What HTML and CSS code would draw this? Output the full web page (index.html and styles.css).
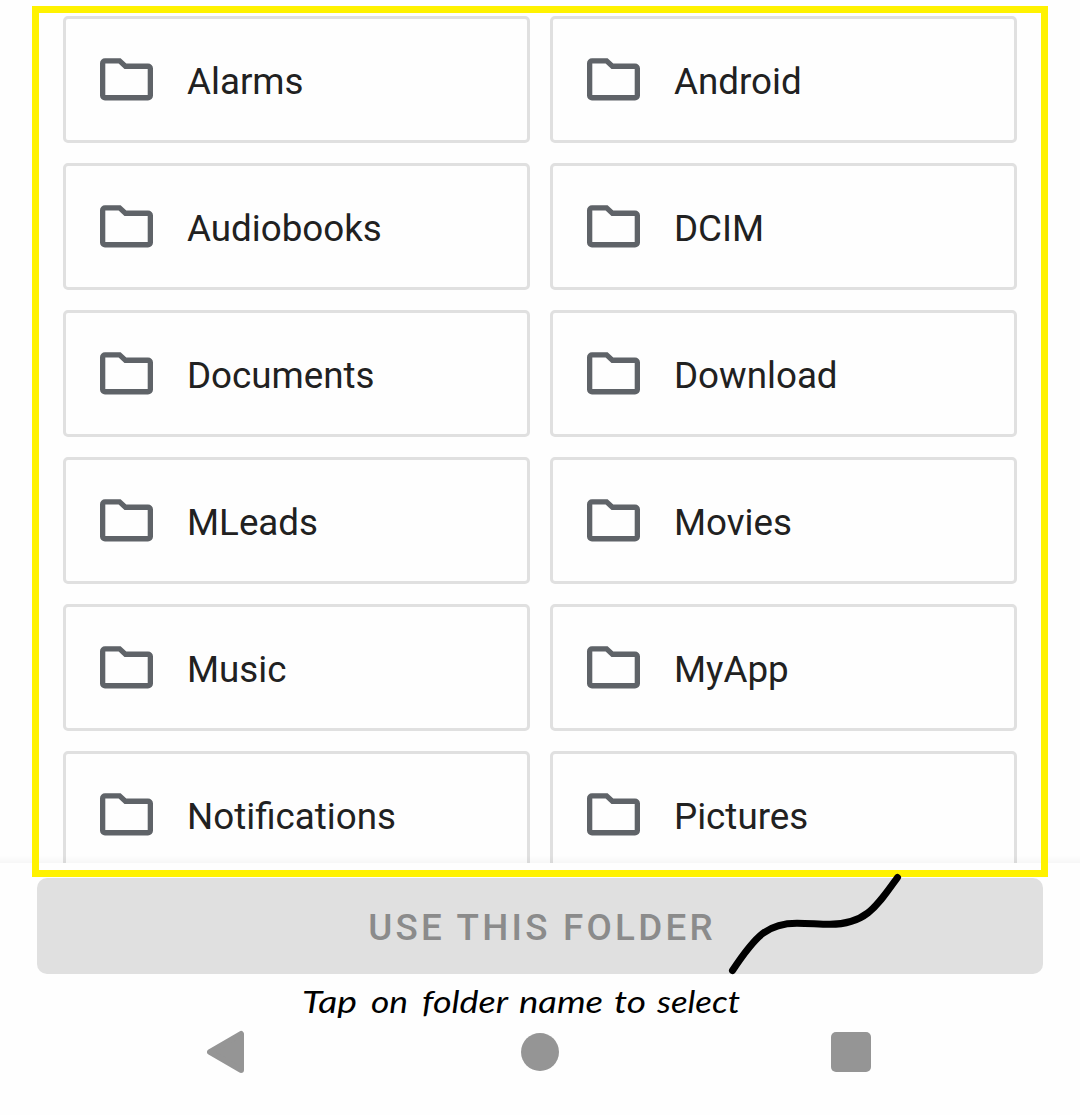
FILE: index.html
```html
<!DOCTYPE html>
<html lang="en">
<head>
<meta charset="utf-8">
<title>Use this folder</title>
<link rel="stylesheet" href="styles.css">
</head>
<body>
<svg width="0" height="0" class="defs" aria-hidden="true">
  <symbol id="folder" viewBox="0 0 54 43">
    <path fill-rule="evenodd" d="M5 .2H20.6L26.300 5.600H48a5 5 0 0 1 5 5V37.500a5 5 0 0 1-5 5H5a5 5 0 0 1-5-5V5.200a5 5 0 0 1 5-5ZM5.300 5.500V37.100H47.700V10.900H24.500L18.600 5.500Z"/>
  </symbol>
</svg>
<div class="screen">
  <main class="list">
    <div class="card"><svg class="icon"><use href="#folder"/></svg><span>Alarms</span></div>
    <div class="card"><svg class="icon"><use href="#folder"/></svg><span>Android</span></div>
    <div class="card"><svg class="icon"><use href="#folder"/></svg><span>Audiobooks</span></div>
    <div class="card"><svg class="icon"><use href="#folder"/></svg><span>DCIM</span></div>
    <div class="card"><svg class="icon"><use href="#folder"/></svg><span>Documents</span></div>
    <div class="card"><svg class="icon"><use href="#folder"/></svg><span>Download</span></div>
    <div class="card"><svg class="icon"><use href="#folder"/></svg><span>MLeads</span></div>
    <div class="card"><svg class="icon"><use href="#folder"/></svg><span>Movies</span></div>
    <div class="card"><svg class="icon"><use href="#folder"/></svg><span>Music</span></div>
    <div class="card"><svg class="icon"><use href="#folder"/></svg><span>MyApp</span></div>
    <div class="card"><svg class="icon"><use href="#folder"/></svg><span>Notifications</span></div>
    <div class="card"><svg class="icon"><use href="#folder"/></svg><span>Pictures</span></div>
  </main>
  <footer class="actions">
    <button class="use">USE THIS FOLDER</button>
    <svg class="hint" width="460" height="46" viewBox="0 0 460 46">
      <text x="-8" y="39" textLength="55" lengthAdjust="spacingAndGlyphs">Tap</text>
      <text x="61" y="39" textLength="37" lengthAdjust="spacingAndGlyphs">on</text>
      <text x="112" y="39" textLength="86" lengthAdjust="spacingAndGlyphs">folder</text>
      <text x="209" y="39" textLength="84" lengthAdjust="spacingAndGlyphs">name</text>
      <text x="304" y="39" textLength="32" lengthAdjust="spacingAndGlyphs">to</text>
      <text x="347" y="39" textLength="83" lengthAdjust="spacingAndGlyphs">select</text>
    </svg>
  </footer>
  <nav class="nav">
    <svg width="38" height="44" viewBox="0 0 38 44"><path d="M3 22 34 4V40Z"/></svg>
    <span class="home"></span>
    <span class="recent"></span>
  </nav>
  <div class="frame"></div>
  <svg class="stroke" width="190" height="110" viewBox="0 0 190 110"><path d="M12.500 100.500C36 65 48 53.200 77 53.200C90 53.200 98 54.300 110 54.300C146 54.300 157 36 177.500 7.500"/></svg>
</div>
</body>
</html>
```
FILE: styles.css
```css
* { box-sizing: border-box; }
body { margin: 0; background: #fefefe; font-family: Roboto, "Liberation Sans", sans-serif; }
.defs { position: absolute; }
.screen { position: relative; width: 1080px; height: 1115px; overflow: hidden; display: flex; flex-direction: column; }
.list {
  position: relative;
  flex: none;
  height: 863px;
  padding: 16px 63px 0;
  overflow: hidden;
  display: grid;
  grid-template-columns: 467px 467px;
  grid-auto-rows: 127px;
  gap: 20px;
}
.list::after {
  content: "";
  position: absolute;
  left: 0;
  right: 0;
  bottom: 0;
  height: 8px;
  background: linear-gradient(rgba(0,0,0,0), rgba(0,0,0,.03));
}
.card {
  display: flex;
  align-items: center;
  gap: 33px;
  padding: 0 34px;
  border: 3px solid #e0e0e0;
  border-radius: 5px;
  font-size: 36.75px;
  line-height: 44px;
  color: #212121;
}
.card span { padding-top: 5px; }
.icon { width: 54px; height: 43px; fill: #5f6368; }
.actions { flex: none; height: 161px; padding-top: 15px; display: flex; flex-direction: column; align-items: center; }
.use {
  flex: none;
  width: 1006px;
  height: 96px;
  padding: 4px 0 0 4px;
  border: 0;
  border-radius: 10px;
  background: #e0e0e0;
  color: #8b8b8b;
  font: 500 36.75px/44px Roboto, "Liberation Sans", sans-serif;
  letter-spacing: 3.25px;
}
.hint { flex: none; font: italic 30px Lato, "Open Sans", sans-serif; fill: #000; overflow: visible; }
.nav { flex: none; height: 56px; padding: 0 209px 0 207px; display: flex; align-items: center; justify-content: space-between; }
.nav svg { fill: #959595; stroke: #959595; stroke-width: 6px; stroke-linejoin: round; }
.home { width: 38px; height: 38px; margin-left: 4px; border-radius: 50%; background: #959595; }
.recent { width: 40px; height: 40px; border-radius: 5px; background: #959595; }
.frame { position: absolute; left: 32px; top: 6px; width: 1016px; height: 871px; border: 7px solid #fff200; }
.stroke { position: absolute; left: 720px; top: 870px; fill: none; stroke: #000; stroke-width: 7px; stroke-linecap: round; }
```
